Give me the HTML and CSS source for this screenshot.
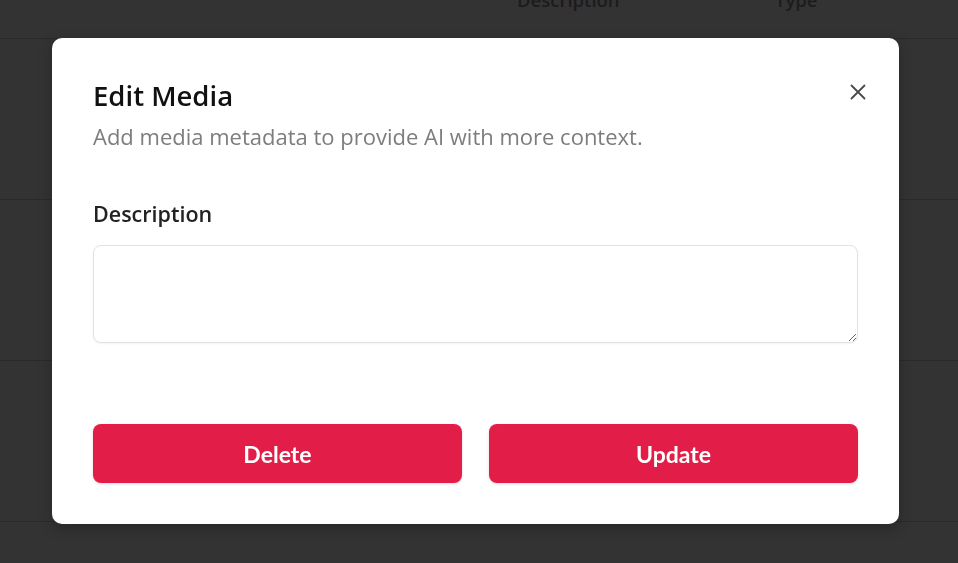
FILE: index.html
```html
<!DOCTYPE html>
<html>
<head>
  <title>Media</title>
  <link rel="stylesheet" href="styles.css">
</head>
<body>

  <table class="media-table">
    <thead>
      <tr>
        <th class="col-name"></th>
        <th class="col-desc">Description</th>
        <th class="col-type">Type</th>
        <th></th>
      </tr>
    </thead>
    <tbody>
      <tr><td></td><td></td><td></td><td></td></tr>
      <tr><td></td><td></td><td></td><td></td></tr>
      <tr><td></td><td></td><td></td><td></td></tr>
    </tbody>
  </table>

  <div class="overlay">
    <div class="modal">
      <button class="close-btn" aria-label="Close">
        <svg width="16" height="16" viewBox="0 0 16 16">
          <path d="M1.5 1.5 L14.5 14.5 M14.5 1.5 L1.5 14.5" stroke="#4a4a4a" stroke-width="1.8" stroke-linecap="round"/>
        </svg>
      </button>
      <h2 class="modal-title">Edit Media</h2>
      <p class="modal-subtitle">Add media metadata to provide AI with more context.</p>

      <label class="field-label" for="description">Description</label>
      <textarea id="description" class="field-input"></textarea>

      <div class="modal-actions">
        <button class="btn btn-danger">Delete</button>
        <button class="btn btn-danger">Update</button>
      </div>
    </div>
  </div>

</body>
</html>
```

FILE: styles.css
```css
body {
  margin: 0;
  background-color: #333;
  font-family: "Open Sans", "Noto Sans", sans-serif;
  color: #222;
  height: 100vh;
  overflow: hidden;
}
.media-table {
  width: 100%;
  border-collapse: collapse;
  margin-top: -13px;
}
.media-table th {
  height: 51px;
  font-size: 18.5px;
  font-weight: 600;
  color: #1c1c1c;
  text-align: left;
  border-bottom: 1px solid #2a2a2a;
  vertical-align: top;
  padding: 0;
}
.media-table .col-name {
  width: 517px;
}
.media-table .col-desc {
  width: 258px;
}
.media-table .col-type {
  width: 120px;
}
.media-table td {
  height: 160px;
  padding: 0;
  border-bottom: 1px solid #2a2a2a;
}
.overlay {
  position: fixed;
  inset: 0;
  display: flex;
  align-items: center;
  justify-content: center;
  padding-right: 7px;
  padding-bottom: 1px;
}
.modal {
  position: relative;
  width: 847px;
  height: 486px;
  box-sizing: border-box;
  background-color: #fff;
  border-radius: 10px;
  box-shadow: 0 4px 14px rgba(0,0,0,0.25);
  padding: 40px 41px 41px;
  display: flex;
  flex-direction: column;
}
.close-btn {
  position: absolute;
  top: 46px;
  right: 33px;
  background: none;
  border: none;
  padding: 0;
  cursor: pointer;
  line-height: 0;
}
.modal-title {
  margin: 0;
  font-size: 27.5px;
  font-weight: 600;
  color: #111;
  line-height: 36px;
}
.modal-subtitle {
  margin: 8px 0 0;
  font-size: 22px;
  color: #7d7d7d;
  line-height: 28px;
}
.field-label {
  margin-top: 50px;
  font-size: 21.5px;
  font-weight: 600;
  color: #222;
  line-height: 28px;
}
.field-input {
  margin-top: 17px;
  height: 98px;
  box-sizing: border-box;
  border: 1px solid #e2e2e2;
  border-radius: 8px;
  resize: vertical;
  padding: 10px 12px;
  font-family: inherit;
  font-size: 16px;
  box-shadow: 0 1px 2px rgba(0,0,0,0.05);
}
.modal-actions {
  margin-top: auto;
  display: flex;
  gap: 27px;
}
.btn {
  flex: 1;
  height: 59px;
  border: none;
  border-radius: 8px;
  font-family: Lato, sans-serif;
  font-size: 23px;
  font-weight: 700;
  color: #fff;
  cursor: pointer;
  box-shadow: 0 1px 3px rgba(0,0,0,0.15);
}
.btn-danger {
  background-color: #e11d48;
}
.btn-danger:hover {
  background-color: #be123c;
}
```
